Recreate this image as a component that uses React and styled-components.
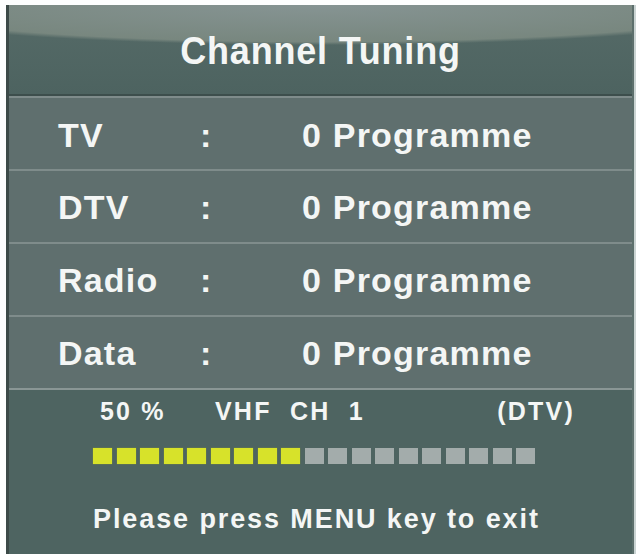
import styled, { createGlobalStyle } from "styled-components";

const Global = createGlobalStyle`
  html, body {
    margin: 0;
    padding: 0;
    background: #fdfefe;
  }
  body {
    font-family: "Liberation Sans", Arial, sans-serif;
  }
`;

const Panel = styled.div`
  width: 628px;
  height: 549px;
  margin: 5px 0 0 6px;
  box-sizing: border-box;
  border-left: 3px solid #3c4a48;
  border-right: 2px solid #5c6f6c;
  box-shadow: 2px 0 0 #c9d3d2;
  display: flex;
  flex-direction: column;
  background: #4f6562;
  color: #f4f6f5;
  font-weight: bold;
  overflow: hidden;
`;

const Header = styled.div`
  height: 89px;
  flex: none;
  display: flex;
  align-items: center;
  justify-content: center;
  border-bottom: 2px solid #3d4e4c;
  background:
    radial-gradient(ellipse 75% 40px at 50% 0, #869493 0%, #78877f 92%, rgba(0,0,0,0) 100%),
    linear-gradient(#566b68, #4d6360);
`;

const Title = styled.div`
  font-size: 36px;
  letter-spacing: 0.8px;
  margin-top: 2px;
  transform: scaleY(1.06);
`;

const Row = styled.div`
  height: 71px;
  flex: none;
  display: grid;
  grid-template-columns: 142px 102px 1fr;
  align-items: center;
  padding-left: 49px;
  border-top: 2px solid #7f8c8b;
  background: #5f6f6e;
  font-size: 34px;
  letter-spacing: 1.2px;
`;

const Cell = styled.span`
  padding-top: ${(p) => p.$shift || 0}px;
`;

const Footer = styled.div`
  flex: 1;
  border-top: 2px solid #8a9695;
  background: #4e6461;
  display: flex;
  flex-direction: column;
  padding: 8px 0 0 84px;
`;

const Status = styled.div`
  display: flex;
  font-size: 25px;
  letter-spacing: 2.2px;
  height: 26px;
  align-items: center;
  margin-left: 7px;
`;

const Item = styled.span`
  width: ${(p) => p.$w}px;
  flex: none;
  text-align: ${(p) => p.$align || "left"};
`;

const Bar = styled.div`
  display: flex;
  gap: 4.5px;
  margin-top: 24px;
  height: 16px;
`;

const Square = styled.div`
  width: 19px;
  height: 16px;
  background: ${(p) => (p.$on ? "#d7e22a" : "#a3acab")};
  box-shadow: ${(p) => (p.$on ? "0 0 1px #9aa324" : "none")};
`;

const Hint = styled.div`
  margin-top: 40px;
  font-size: 27px;
  letter-spacing: 1.9px;
`;

const rows = [
  ["TV", ":", "0 Programme"],
  ["DTV", ":", "0 Programme"],
  ["Radio", ":", "0 Programme"],
  ["Data", ":", "0 Programme"],
];

export default function App() {
  const total = 19;
  const done = 9;
  return (
    <>
      <Global />
      <Panel>
        <Header>
          <Title>Channel Tuning</Title>
        </Header>
        {rows.map(([a, b, c], i) => (
          <Row key={a}>
            <Cell $shift={i === 0 ? 4 : 2}>{a}</Cell>
            <Cell $shift={i === 0 ? 4 : 2}>{b}</Cell>
            <Cell $shift={i === 0 ? 4 : 2}>{c}</Cell>
          </Row>
        ))}
        <Footer>
          <Status>
            <Item $w={115}>50 %</Item>
            <Item $w={160}>VHF&nbsp;&nbsp;CH&nbsp;&nbsp;1</Item>
            <Item $w={200} $align="right">(DTV)</Item>
          </Status>
          <Bar>
            {Array.from({ length: total }, (_, i) => (
              <Square key={i} $on={i < done} />
            ))}
          </Bar>
          <Hint>Please press MENU key to exit</Hint>
        </Footer>
      </Panel>
    </>
  );
}
